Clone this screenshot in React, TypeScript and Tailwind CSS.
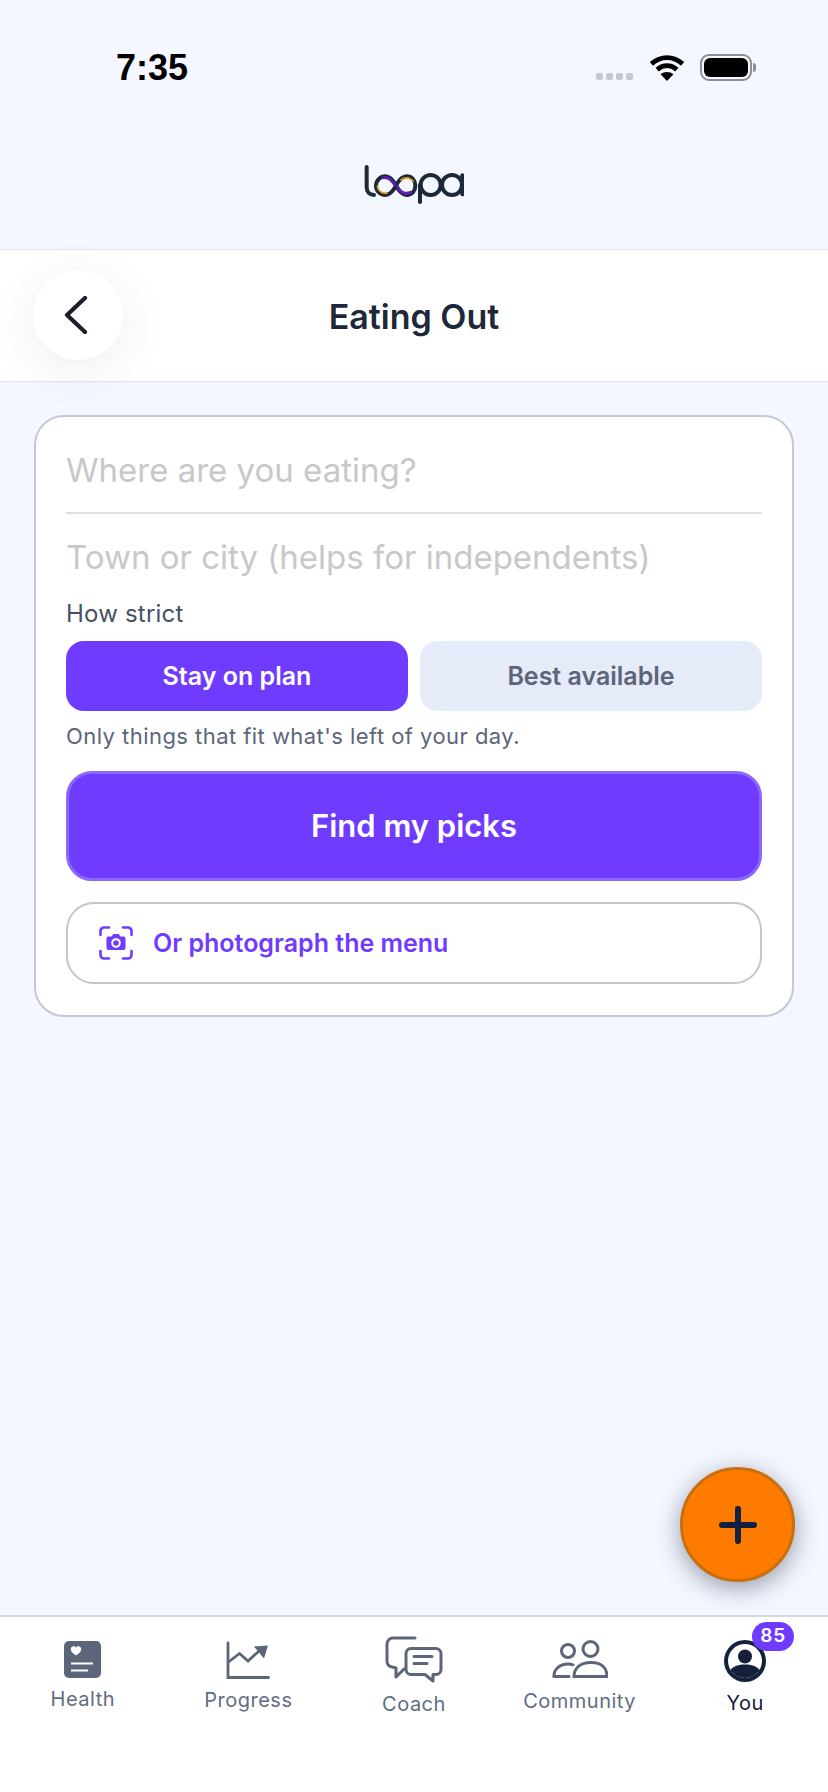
import type { ReactNode } from "react";

const sans = "font-['Inter','Noto_Sans',sans-serif]";

function Logo() {
  return (
    <svg width="100" height="39" viewBox="130 75 300 117" fill="none" strokeLinecap="round" aria-label="loopa">
      <g stroke="#1d2838" strokeWidth="12">
        <path d="M138 81V142C138 156 147 165 160 165" />
        <path d="M226 137C216 118 206 109 194 109C178 109 166 122 166 137C166 152 178 165 194 165C206 165 216 156 226 137C236 118 246 109 258 109C274 109 284 122 284 137C284 152 274 165 258 165C246 165 236 156 226 137Z" />
        <path d="M298 135V186" />
        <circle cx="330" cy="135" r="30" />
        <circle cx="394" cy="135" r="30" />
        <path d="M425 106V163" />
      </g>
      <path d="M188 113C202 110 214 122 222 134M232 142C240 158 254 163 270 157" stroke="#5b21b6" strokeWidth="9" />
      <path d="M170 138C170 151 182 160 198 160M240 120C250 110 266 110 278 124" stroke="#f59e0b" strokeWidth="4.500" />
    </svg>
  );
}

function Wifi() {
  return (
    <svg width="36" height="27" viewBox="0 0 34 26" fill="none" stroke="#000" strokeWidth="4.6">
      <path d="M2 9.500c9-8 21-8 30 0" />
      <path d="M7.500 15c6-5 13-5 19 0" />
      <path d="M17 26l-6.200-6.400c3.600-3 8.800-3 12.400 0z" fill="#000" stroke="none" />
    </svg>
  );
}

function Battery() {
  return (
    <div className="flex items-center">
      <div className="flex h-[27px] w-[52px] items-center justify-center rounded-[9px] border-2 border-[#8e8e93]">
        <div className="h-[19px] w-[44px] rounded-[6px] bg-black" />
      </div>
      <div className="ml-[1px] h-[9px] w-[3px] rounded-r-full bg-[#8e8e93]" />
    </div>
  );
}

function StatusBar() {
  return (
    <div className="flex h-[134px] items-center justify-between pl-[116px] pr-[72px]">
      <span className="pt-[2px] font-['Liberation_Sans',sans-serif] text-[36px] font-bold text-black">7:35</span>
      <div className="flex items-center">
        <div className="mr-[16px] mt-[18px] flex gap-[3px]">
          <span className="h-[7px] w-[7px] rounded-[2px] bg-[#c5c8d0]" />
          <span className="h-[7px] w-[7px] rounded-[2px] bg-[#c5c8d0]" />
          <span className="h-[7px] w-[7px] rounded-[2px] bg-[#c5c8d0]" />
          <span className="h-[7px] w-[7px] rounded-[2px] bg-[#c5c8d0]" />
        </div>
        <div className="mr-[15px]">
          <Wifi />
        </div>
        <Battery />
      </div>
    </div>
  );
}

function CameraScan() {
  return (
    <svg width="34" height="34" viewBox="0 0 34 34" fill="none" stroke="#6f3cff" strokeWidth="2.6" strokeLinecap="round">
      <path d="M1.500 9V5a3.500 3.500 0 0 1 3.500-3.500h5M24 1.500h5A3.500 3.500 0 0 1 32.500 5v4M32.500 25v4a3.500 3.500 0 0 1-3.500 3.500h-5M10 32.500H5A3.500 3.500 0 0 1 1.500 29v-4" />
      <path
        d="M9.500 10.500h3.200l1.500-2.500h5.600l1.500 2.500h3.200a2 2 0 0 1 2 2v9.500a2 2 0 0 1-2 2h-15a2 2 0 0 1-2-2v-9.500a2 2 0 0 1 2-2z"
        fill="#6f3cff"
        stroke="none"
      />
      <circle cx="17" cy="17" r="3.800" fill="#6f3cff" stroke="#fff" strokeWidth="2" />
    </svg>
  );
}

function HealthIcon() {
  return (
    <svg width="37" height="37" viewBox="0 0 37 37">
      <rect width="37" height="37" rx="5" fill="#5c6579" />
      <path d="M12 14.500c-3-2.300-5.200-4-5.200-6.300 0-3 3.800-4 5.200-1.400 1.400-2.600 5.200-1.600 5.200 1.400 0 2.300-2.200 4-5.200 6.300z" fill="#fff" />
      <path d="M7 22.500h22M7 29.500h17" stroke="#fff" strokeWidth="2" />
    </svg>
  );
}

function ProgressIcon() {
  return (
    <svg width="44" height="38" viewBox="0 0 44 38" fill="none" stroke="#5c6579" strokeWidth="2.800" strokeLinecap="round">
      <path d="M2 2v34.500h40.500" />
      <path d="M2.500 21l11-8.500 8.500 7.500 11-10" />
      <path d="M28 5.500L42 4.500l-4 13z" fill="#5c6579" stroke="none" />
    </svg>
  );
}

function CoachIcon() {
  return (
    <svg width="58" height="47" viewBox="0 0 58 47" fill="none" stroke="#5c6579" strokeWidth="3" strokeLinecap="round" strokeLinejoin="round">
      <path d="M30 2H8a6 6 0 0 0-6 6v17a6 6 0 0 0 5 6l4 1v9l8-8" />
      <path d="M26 12.500h25a5 5 0 0 1 5 5v16a5 5 0 0 1-5 5h-3v6.500l-8-6.500H26a5 5 0 0 1-5-5v-16a5 5 0 0 1 5-5z" fill="#fff" />
      <path d="M29 20.500h18M29 27.500h13" />
    </svg>
  );
}

function CommunityIcon() {
  return (
    <svg width="56" height="38" viewBox="0 0 56 38" fill="none" stroke="#5c6579" strokeWidth="3" strokeLinecap="round">
      <circle cx="16" cy="11" r="6.500" />
      <circle cx="38.500" cy="9" r="7.500" />
      <path d="M2 36c0-7 6-12 14-12 2 0 3.500.3 5 .8" />
      <path d="M22 36.500c0-9 7-14 17-14s16 5 16 14z" />
      <path d="M2 36.500h15" />
    </svg>
  );
}

function YouIcon() {
  return (
    <svg width="42" height="42" viewBox="0 0 42 42">
      <circle cx="21" cy="21" r="21" fill="#15213b" />
      <circle cx="21" cy="21" r="17" fill="#fff" />
      <circle cx="21" cy="16.500" r="7" fill="#15213b" />
      <path d="M6.500 30c3-4 8-5.500 14.500-5.500S32.500 26 35.500 30C32 35 27 38 21 38S10 35 6.500 30z" fill="#15213b" />
    </svg>
  );
}

type TabProps = { label: string; icon: ReactNode; top: string; gap: string; active?: boolean; badge?: string };

function Tab({ label, icon, top, gap, active, badge }: TabProps) {
  return (
    <div className={`relative flex flex-col items-center ${top}`}>
      <div className="relative">
        {icon}
        {badge && (
          <span className="absolute left-[28px] top-[-18px] flex h-[29px] w-[42px] items-center justify-center rounded-full bg-[#6f3cff] text-[19px] font-semibold tracking-[1px] text-white">
            {badge}
          </span>
        )}
      </div>
      <span
        className={`${gap} text-[20px] leading-[24px] tracking-[0.5px] ${active ? "text-[#15213b]" : "text-[#626c82]"}`}
      >
        {label}
      </span>
    </div>
  );
}

export default function App() {
  return (
    <div className={`${sans} relative flex h-[1792px] w-[828px] flex-col overflow-hidden bg-[#f4f7ff]`}>
      <StatusBar />
      <div className="flex h-[115px] justify-center pt-[31px]">
        <Logo />
      </div>

      <div className="relative flex h-[133px] items-center justify-center border-y border-y-[#dfe3ee] bg-white">
        <div className="absolute left-[33px] top-[20px] flex h-[90px] w-[90px] items-center justify-center rounded-full bg-white shadow-[0_10px_50px_rgba(30,40,60,0.08)]">
          <svg width="26" height="38" viewBox="0 0 26 38" fill="none" stroke="#1a1f2b" strokeWidth="4.200" strokeLinecap="round" strokeLinejoin="round" className="mr-[4px]">
            <path d="M22 2L4 19l18 17" />
          </svg>
        </div>
        <span className="pt-[2px] text-[34px] font-semibold text-[#1d2838]">Eating Out</span>
      </div>

      <div className="flex-1 px-[34px] pt-[33px]">
        <div className="rounded-[30px] border-2 border-[#c4c8d6] bg-white px-[30px] pb-[31px]">
          <div className="flex h-[97px] items-center border-b-2 border-b-[#e0e0e2] pt-[12px] text-[33px] text-[#c8c8c8]">
            Where are you eating?
          </div>
          <div className="flex h-[75px] items-center pt-[13px] text-[33px] text-[#c8c8c8]">
            Town or city (helps for independents)
          </div>
          <div className="mt-[9px] text-[24px] leading-[32px] tracking-[0.2px] text-[#465066]">How strict</div>
          <div className="mt-[11px] grid grid-cols-2 gap-[12px]">
            <div className="flex h-[70px] items-center justify-center rounded-[18px] bg-[#6f3cff] pt-[2px] text-[25px] font-semibold text-white">
              Stay on plan
            </div>
            <div className="flex h-[70px] items-center justify-center rounded-[18px] bg-[#e5ebf9] pt-[2px] text-[25px] font-semibold text-[#5c6579]">
              Best available
            </div>
          </div>
          <div className="mt-[9px] text-[22px] leading-[32px] tracking-[0.45px] text-[#5c6579]">
            Only things that fit what's left of your day.
          </div>
          <div className="mt-[19px] flex h-[110px] items-center justify-center rounded-[26px] border-[3px] border-[#8b66ff] bg-[#6f3cff] pt-[1px] text-[31px] font-semibold text-white">
            Find my picks
          </div>
          <div className="mt-[21px] flex h-[82px] items-center gap-[20px] rounded-[28px] border-2 border-[#c4c6cc] pl-[31px] text-[25px] font-semibold text-[#6f3cff]">
            <CameraScan />
            <span className="pt-[2px]">Or photograph the menu</span>
          </div>
        </div>
      </div>

      <div className="absolute left-[680px] top-[1467px] flex h-[115px] w-[115px] items-center justify-center rounded-full border-[3px] border-[#c86f10] bg-[#ff7b00] shadow-[0_6px_24px_rgba(30,40,60,0.45)]">
        <svg width="38" height="38" viewBox="0 0 38 38" stroke="#12213f" strokeWidth="6" strokeLinecap="round">
          <path d="M19 3v32M3 19h32" />
        </svg>
      </div>

      <nav className="grid h-[177px] grid-cols-5 border-t-2 border-t-[#d3d7e2] bg-white">
        <Tab label="Health" icon={<HealthIcon />} top="pt-[24px]" gap="mt-[9px]" />
        <Tab label="Progress" icon={<ProgressIcon />} top="pt-[24px]" gap="mt-[9px]" />
        <Tab label="Coach" icon={<CoachIcon />} top="pt-[19px]" gap="mt-[9px]" />
        <Tab label="Community" icon={<CommunityIcon />} top="pt-[23px]" gap="mt-[11px]" />
        <Tab label="You" icon={<YouIcon />} top="pt-[23px]" gap="mt-[9px]" active badge="85" />
      </nav>
    </div>
  );
}
